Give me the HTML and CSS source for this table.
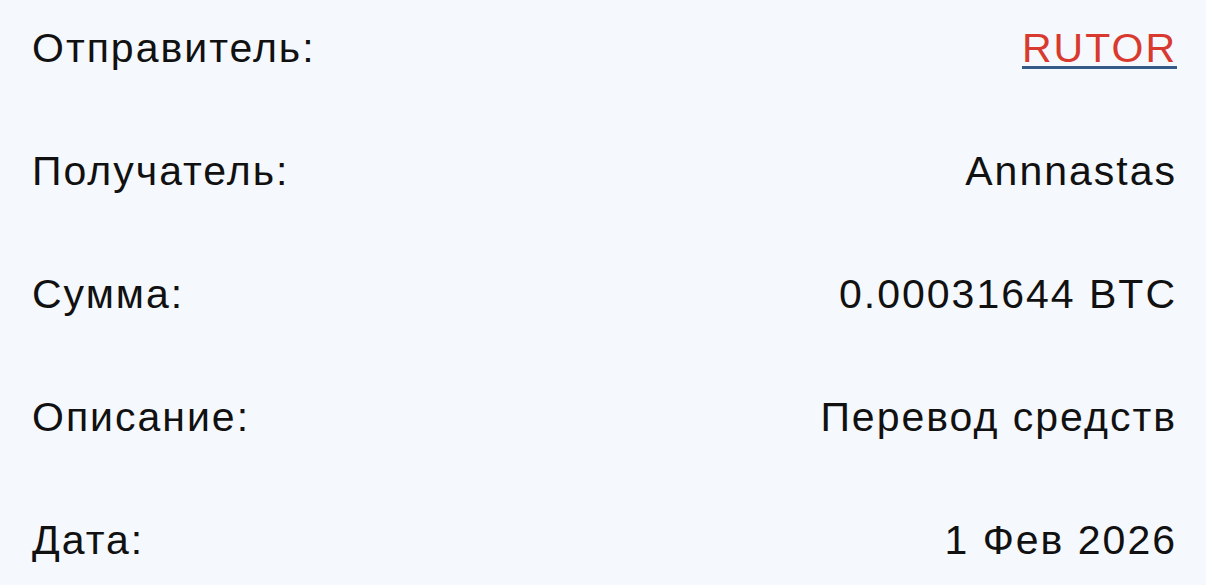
FILE: index.html
```html
<!DOCTYPE html>
<html lang="ru">
<head>
<meta charset="utf-8">
<link rel="stylesheet" href="styles.css">
</head>
<body>
<div class="details">
  <div class="row"><span class="label">Отправитель:</span><a class="value link" href="#">RUTOR</a></div>
  <div class="row"><span class="label">Получатель:</span><span class="value">Annnastas</span></div>
  <div class="row"><span class="label">Сумма:</span><span class="value">0.00031644 BTC</span></div>
  <div class="row"><span class="label">Описание:</span><span class="value">Перевод средств</span></div>
  <div class="row"><span class="label">Дата:</span><span class="value">1 Фев 2026</span></div>
</div>
</body>
</html>
```
FILE: styles.css
```css
html, body {
  margin: 0;
  padding: 0;
  background: #f5f8fc;
}
body {
  font-family: "Liberation Sans", Arial, sans-serif;
  color: #111;
  overflow: hidden;
}
.details {
  display: flex;
  flex-direction: column;
  gap: 75px;
  padding: 24px 29px 0 32px;
}
.row {
  display: flex;
  justify-content: space-between;
  align-items: center;
  font-size: 41px;
  line-height: 48px;
  letter-spacing: 2px;
}
.link {
  color: #d93a2f;
  text-decoration: underline;
  text-decoration-color: #345a88;
  text-decoration-thickness: 3px;
  text-underline-offset: 4px;
}
```
